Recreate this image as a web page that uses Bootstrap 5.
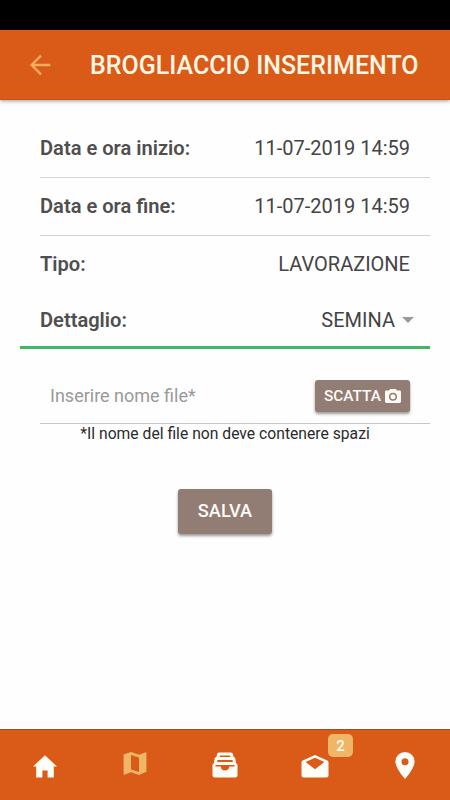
<!DOCTYPE html>
<html lang="it">
<head>
<meta charset="utf-8">
<meta name="viewport" content="width=device-width, initial-scale=1">
<title>Brogliaccio inserimento</title>
<link href="https://cdn.jsdelivr.net/npm/bootstrap@5.3.0/dist/css/bootstrap.min.css" rel="stylesheet">
<style>
  body { font-family: Roboto, "Liberation Sans", sans-serif; background: #fefefe; color: #444; font-size: 20px; line-height: 24px; }
  .status-strip { height: 30px; background: #000; }
  .app-header { height: 70px; padding-left: 29px; gap: 39px; background: #da5a18; box-shadow: 0 1px 4px rgba(0,0,0,.4); border-bottom: 1px solid #c9541a; }
  .app-header h1 { font-size: 25px; font-weight: 500; color: #fff6e4; line-height: 30px; padding-top: 2px; }
  .app-header a { color: #f6ad62; }
  .main-area { padding-top: 18px; }
  .form-line { height: 58px; margin: 0 20px 0 40px; padding: 0 20px 2px 0; border-bottom: 1px solid #d4d4d4; }
  .form-line.first-line { height: 60px; padding-bottom: 0; }
  .form-line.type-line { height: 57px; border: 0; padding-bottom: 1px; }
  .field-label { font-weight: 600; font-size: 20.1px; color: #4f4f4f; }
  .detail-line { height: 56px; margin: 0 20px; padding: 0 16px 0 20px; border-bottom: 3px solid #3cb962; }
  .caret-down { width: 0; height: 0; margin-left: 7px; border: 6px solid transparent; border-top-color: #999; border-bottom: 0; }
  .file-line { height: 75px; margin: 0 20px 0 40px; padding: 20px 20px 0 10px; border-bottom: 1px solid #c6c6c6; }
  .file-line input { font-size: 18px; outline: 0; color: #444; }
  .file-line input::placeholder { color: #999; opacity: 1; }
  .btn-taupe { --bs-btn-bg: #927d75; --bs-btn-color: #fffaf5; --bs-btn-hover-bg: #836f68; --bs-btn-hover-color: #fff;
    --bs-btn-border-width: 0; --bs-btn-border-radius: 3px; font-weight: 500; box-shadow: 0 2px 3px rgba(0,0,0,.4); }
  .btn-shoot { width: 95px; height: 32px; font-size: 15.4px; }
  .btn-shoot span { padding-top: 2px; }
  .btn-save { width: 94px; height: 45px; font-size: 18.2px; line-height: 43px; padding: 0 0 2px; }
  .save-area { margin-top: 46px; }
  .hint { font-size: 15.7px; line-height: 18px; padding-top: 1px; color: #2b2b2b; }
  .tabs-bar { height: 71px; background: #da5a18; border-top: 1px solid #95502a; }
  .tabs-bar a { color: #fffdf8; }
  .tabs-bar a.active-tab { color: #efb668; }
  .tab-home, .tab-mail { padding-top: 25px; }
  .tab-map, .tab-archive { padding-top: 22px; }
  .tab-place { padding-top: 22px; }
  .count-tag { left: calc(50% + 13px); top: 4px; width: 25px; height: 23px; border-radius: 5px; background: #efb668; color: #fffaf0; font-size: 15px; font-weight: 500; }
</style>
</head>
<body>
<div class="d-flex flex-column vh-100 overflow-hidden">
  <div class="status-strip flex-shrink-0"></div>
  <header class="app-header flex-shrink-0 d-flex align-items-center">
    <a href="#" class="d-flex" aria-label="Indietro">
      <svg width="22" height="22" viewBox="0 0 22 22" fill="none" stroke="currentColor" stroke-width="2.3"><path d="M21.3 11H2.6M12 1.6 2.6 11l9.4 9.4"/></svg>
    </a>
    <h1 class="mb-0 text-nowrap">BROGLIACCIO INSERIMENTO</h1>
  </header>

  <main class="flex-grow-1 main-area">
    <div class="form-line first-line d-flex align-items-center justify-content-between">
      <span class="field-label">Data e ora inizio:</span><span>11-07-2019 14:59</span>
    </div>
    <div class="form-line d-flex align-items-center justify-content-between">
      <span class="field-label">Data e ora fine:</span><span>11-07-2019 14:59</span>
    </div>
    <div class="form-line type-line d-flex align-items-center justify-content-between">
      <span class="field-label">Tipo:</span><span>LAVORAZIONE</span>
    </div>
    <div class="detail-line d-flex align-items-center justify-content-between">
      <span class="field-label">Dettaglio:</span>
      <span class="d-flex align-items-center"><span>SEMINA</span><span class="caret-down"></span></span>
    </div>
    <div class="file-line d-flex align-items-center justify-content-between">
      <input type="text" class="border-0 bg-transparent p-0" placeholder="Inserire nome file*" aria-label="Nome file">
      <button type="button" class="btn btn-taupe btn-shoot p-0 d-flex align-items-center justify-content-center gap-1">
        <span>SCATTA</span>
        <svg width="16" height="14" viewBox="0 0 16 14" fill="currentColor" fill-rule="evenodd"><path d="M1.4 1.6H4L5.3 0h5.4L12 1.6h2.6Q16 1.6 16 3v9.600Q16 14 14.600 14H1.400Q0 14 0 12.600V3Q0 1.600 1.400 1.600ZM8 3.700a4 4 0 1 0 0 8 4 4 0 0 0 0-8Zm0 1.500a2.500 2.500 0 1 1 0 5 2.500 2.500 0 0 1 0-5Z"/></svg>
      </button>
    </div>
    <p class="hint text-center mb-0">*Il nome del file non deve contenere spazi</p>
    <div class="d-flex justify-content-center save-area">
      <button type="button" class="btn btn-taupe btn-save">SALVA</button>
    </div>
  </main>

  <nav class="tabs-bar flex-shrink-0 row g-0 text-center">
    <a href="#" class="col d-flex justify-content-center tab-home" aria-label="Home">
      <svg width="24" height="23" viewBox="0 0 24 23" fill="currentColor"><path d="M12 .3 24 11.500h-3.200V22.600h-6.200V15.500H9.400v7.100H3.200V11.500H0Z"/></svg>
    </a>
    <a href="#" class="col d-flex justify-content-center active-tab tab-map" aria-label="Mappa">
      <svg width="24" height="24" viewBox="0 0 24 24" fill="currentColor" fill-rule="evenodd"><path d="M.6 2.600 8 0l8 2.700L22.800.2q.6-.2.600.5v18.600l-.5.6L16 22.900l-8-2.700-6.800 2.600q-.6.200-.6-.5ZM8 2.900v14.700l8 2.400V5.400Z"/></svg>
    </a>
    <a href="#" class="col d-flex justify-content-center tab-archive" aria-label="Archivio">
      <svg width="26" height="26" viewBox="0 0 26 26" fill="currentColor" fill-rule="evenodd"><path d="M7 .5h12q1.600 0 1.900 1.500l.7 3q1.500.2 1.800 1.700l.7 4.500q1.400.6 1.400 2.200V23q0 2.500-2.500 2.500H3Q.5 25.500.5 23v-9.600q0-1.600 1.400-2.200l.7-4.500Q2.900 5.200 4.400 5l.7-3Q5.400.5 7 .5Zm1 3L7.600 5h10.800L18 3.500ZM5.500 8l-.4 2h15.800l-.4-2ZM3.500 13v1.500h5.200q.4 4 4.300 4t4.300-4h5.200V13Z"/></svg>
    </a>
    <a href="#" class="col d-flex justify-content-center position-relative tab-mail" aria-label="Messaggi">
      <svg width="28" height="23" viewBox="0 0 28 23" fill="currentColor" fill-rule="evenodd"><path d="M14 0 26.300 5.500Q27.500 6.100 27.500 7.500V20.500Q27.500 22.500 25.500 22.500H2.500Q.5 22.500.5 20.500V7.500Q.5 6.100 1.700 5.500ZM14 2.700 4.600 7l9.400 7.200L23.400 7Z"/></svg>
      <span class="count-tag position-absolute d-flex align-items-center justify-content-center">2</span>
    </a>
    <a href="#" class="col d-flex justify-content-center tab-place" aria-label="Posizione">
      <svg width="20" height="27" viewBox="0 0 20 27" fill="currentColor" fill-rule="evenodd"><path d="M10 0a9.600 9.600 0 0 1 9.600 9.600Q19.600 16 10 27 .4 16 .4 9.600A9.600 9.600 0 0 1 10 0Zm0 6.200a3.500 3.500 0 1 0 0 7 3.500 3.500 0 0 0 0-7Z"/></svg>
    </a>
  </nav>
</div>
<script src="https://cdn.jsdelivr.net/npm/bootstrap@5.3.0/dist/js/bootstrap.bundle.min.js"></script>
</body>
</html>
